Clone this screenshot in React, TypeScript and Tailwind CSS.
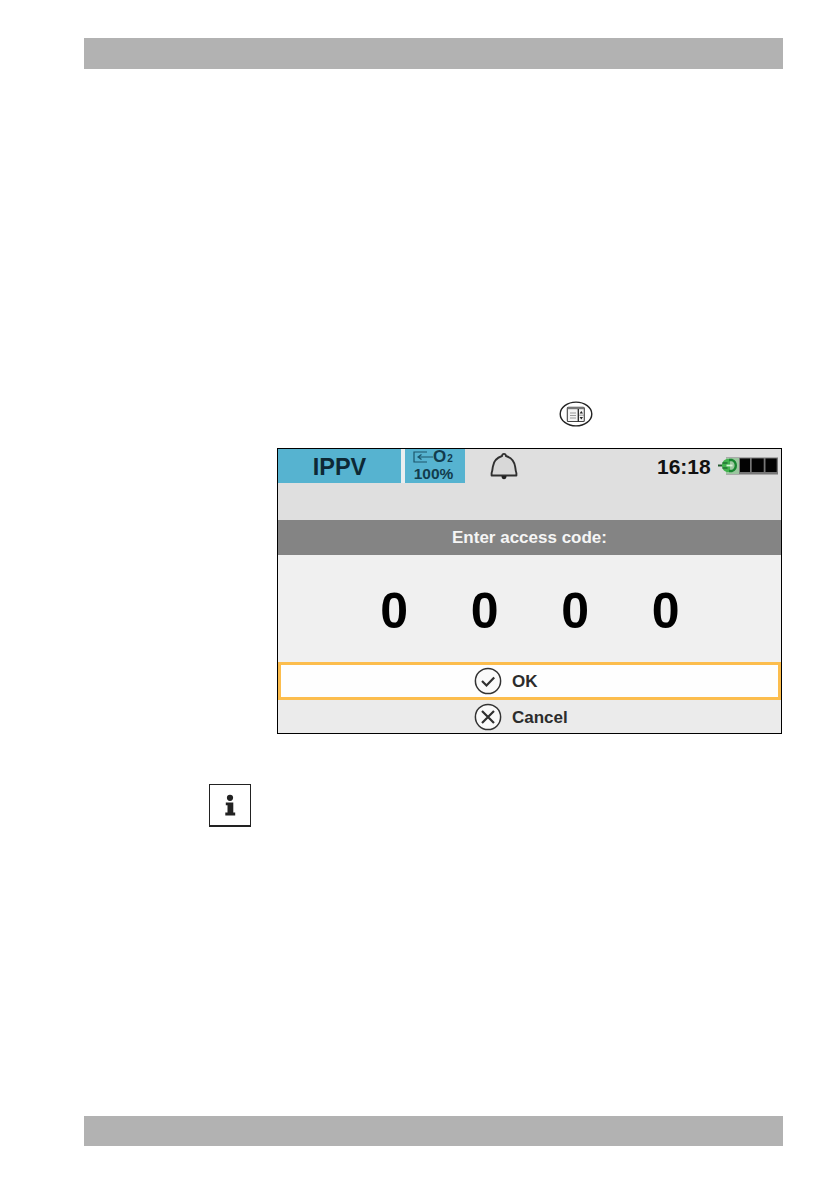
import React from "react";

function MenuButtonIcon() {
  return (
    <svg width="34" height="26" viewBox="0 0 34 26" fill="none" className="ml-[559px] mt-[332px] block">
      <ellipse cx="17" cy="13" rx="15.8" ry="11.9" stroke="#222" strokeWidth="1.4" />
      <rect x="8.3" y="6.3" width="17" height="14.200" rx="1" fill="#f4f4f4" stroke="#444" strokeWidth="1.1" />
      <path d="M8.500 7.2h16.500" stroke="#777" strokeWidth="2" />
      <path d="M11 12h6M11 14.5h6M11 17h6" stroke="#999" strokeWidth="1" />
      <path d="M19.300 8v12.5" stroke="#222" strokeWidth="1.3" />
      <path d="M20 14.200h5" stroke="#777" strokeWidth=".7" />
      <path d="M20.600 12.500l1.700-2.500 1.700 2.500zM20.600 16l1.700 2.500 1.700-2.500z" fill="#222" />
    </svg>
  );
}

function BellIcon() {
  return (
    <svg width="28" height="29" viewBox="0 0 28 29" fill="none" className="ml-[25px] mt-[3px]">
      <path
        d="M12 4C12.200 2.500 12.900 1.900 14 1.900s1.800.6 2 2.100c5 1.500 8.400 5.800 9.200 10.800.3 2.500.5 4.500 1.200 6.200v2.500H1.600V21c.7-1.700.9-3.700 1.200-6.200C3.600 9.800 7 5.500 12 4z"
        fill="#d8d8d8"
        stroke="#303030"
        strokeWidth="1.9"
        strokeLinejoin="round"
      />
      <path d="M11.500 24h5c0 2.200-1 3.300-2.500 3.300s-2.500-1.100-2.500-3.300z" fill="#202020" />
    </svg>
  );
}

function BatteryIcon() {
  return (
    <svg width="62" height="18" viewBox="0 0 62 18" fill="none">
      <path d="M9 .5h52v17H9z" fill="#777" />
      <path d="M9 1h13v16H9z" fill="#9cc6a0" />
      <path d="M23 1.500h10V15H23zM34.700 1.500h12V15h-12zM48.500 1.500h11.200V15H48.500z" fill="#030303" />
      <path d="M1 8.500h5" stroke="#245c30" strokeWidth="2" />
      <path d="M5 8.500C5 4.500 7.500 2 11 2h2v13h-2c-3.500 0-6-2.500-6-6.500z" fill="#42b34e" />
      <path d="M5.500 6h5M5.500 11h5" stroke="#247334" strokeWidth="1.600" />
      <path d="M12 3h3c2.500 1 3.800 3 3.800 5.500S17.500 13 15 14h-3" stroke="#188730" strokeWidth="2.400" />
      <path d="M9.500 8.500h6" stroke="#d9f6d9" strokeWidth="1.800" />
    </svg>
  );
}

function OxygenInletIcon() {
  return (
    <svg width="20" height="12" viewBox="0 0 20 12" fill="none" stroke="#1c566b" strokeWidth="1.200">
      <path d="M14 1H1v10h13" />
      <path d="M20 6H5M8.500 3.500L5 6l3.500 2.500" />
    </svg>
  );
}

function RoundIcon({ path }: { path: string }) {
  return (
    <svg width="28" height="28" viewBox="0 0 28 28" fill="none" className="shrink-0">
      <circle cx="14" cy="14" r="12.600" stroke="#333" strokeWidth="1.500" fill="#fafafa" />
      <path d={path} stroke="#303030" strokeWidth="2.200" />
    </svg>
  );
}

function DeviceScreen() {
  return (
    <section className="ml-[277px] mt-[21px] flex h-[286px] w-[505px] flex-col border border-black bg-[#ebebeb]">
      <header className="flex h-[71px] items-start bg-[#dfdfdf]">
        <div className="flex h-[34px] w-[123px] items-center justify-center bg-[#56b3d0] pt-[3px] text-[23.500px] leading-none font-bold text-[#0d2835]">
          <span>IPPV</span>
        </div>
        <div className="flex h-[34px] w-[4px] bg-[#e9eef0]" />
        <div className="flex h-[34px] w-[60px] flex-col items-center bg-[#56b3d0] text-[#123c4d]">
          <div className="flex h-[16px] w-full items-center pl-[8px]">
            <OxygenInletIcon />
            <span className="text-[17px] leading-[16px] font-bold">O</span>
            <span className="mt-[3px] ml-px text-[10px] leading-none font-bold">2</span>
          </div>
          <span className="pr-[3px] text-[15.500px] leading-[18px] font-bold">100%</span>
        </div>
        <BellIcon />
        <span className="mt-[6px] ml-[139px] w-[55px] text-[21px] leading-[24px] font-bold text-[#111]">16:18</span>
        <div className="mt-[8px] ml-[5px]">
          <BatteryIcon />
        </div>
      </header>
      <div className="flex h-[35px] items-center justify-center bg-[#848484] text-[17px] font-bold text-[#f5f5f5]">
        Enter access code:
      </div>
      <div className="flex h-[107px] items-center bg-[#f0f0f0] pt-[5px] pl-[71px] text-[50px] leading-none font-bold text-black">
        {[0, 1, 2, 3].map((digit) => (
          <span key={digit} className="w-[90.500px] text-center">
            0
          </span>
        ))}
      </div>
      <div className="flex h-[38px] items-center border-[3px] border-[#fcbd4d] bg-[#fefefe] pl-[193px] text-[17px] font-bold text-[#2c2c2c]">
        <RoundIcon path="M8 14l4.500 4.500 7.700-8" />
        <span className="mt-px ml-[10px]">OK</span>
      </div>
      <div className="flex h-[33px] items-center pl-[196px] text-[17px] font-bold text-[#2c2c2c]">
        <RoundIcon path="M8 8l12 12M20 8L8 20" />
        <span className="mt-[2px] ml-[10px]">Cancel</span>
      </div>
    </section>
  );
}

export default function App() {
  return (
    <main
      className="flex h-[1190px] w-[838px] flex-col bg-white"
      style={{ fontFamily: '"Liberation Sans", Arial, sans-serif' }}
    >
      <div className="mt-[38px] ml-[84px] h-[31px] w-[699px] shrink-0 bg-[#b2b2b2]" />
      <MenuButtonIcon />
      <DeviceScreen />
      <div className="mt-[50px] ml-[209px] flex h-[43px] w-[42px] items-center justify-center border border-b-2 border-[#222]">
        <svg width="12" height="22" viewBox="0 0 12 22" fill="#222">
          <circle cx="6" cy="3.800" r="3.100" />
          <path d="M1.800 8.500h7.500v10h1.900v3H1.300v-3h2.200v-7.300H1.800z" />
        </svg>
      </div>
      <div className="mt-[289px] ml-[84px] h-[30px] w-[699px] shrink-0 bg-[#b2b2b2]" />
    </main>
  );
}
